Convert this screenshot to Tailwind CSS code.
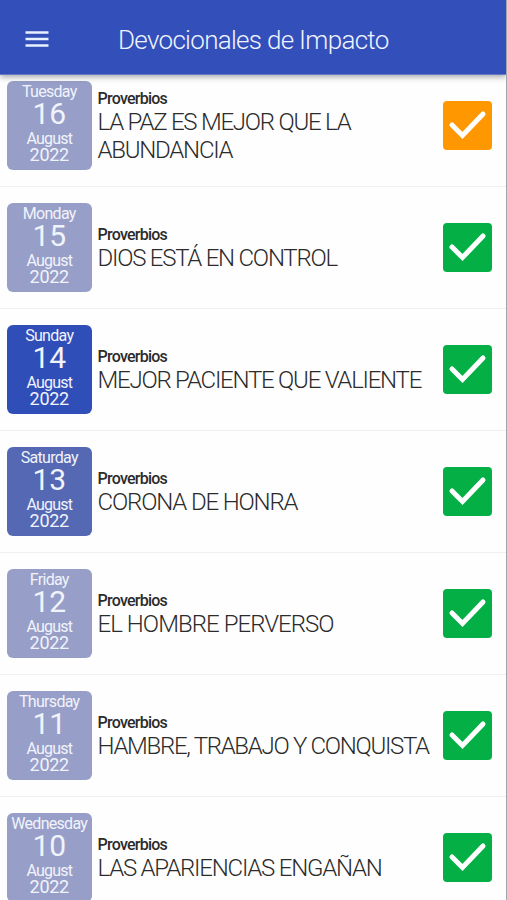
<!DOCTYPE html>
<html lang="es">

<head>
    <meta charset="UTF-8">
    <meta name="viewport" content="width=device-width, initial-scale=1.0">
    <script src="https://cdn.jsdelivr.net/npm/@tailwindcss/browser@4"></script>
    <title>Devocionales de Impacto</title>
</head>

<body class="bg-[#fefefe] font-['Roboto','Noto_Sans',sans-serif]">

    <div class="h-[900px] w-[507px] overflow-hidden border-r border-[#a3a6ad]">
        <!-- header -->
        <header class="relative z-10 flex h-[75px] items-center bg-[#324fba] pt-1 pl-[25px] border-b border-[#6378c6] shadow-[0_2px_6px_rgba(0,0,0,0.35)]">
            <button aria-label="Menu">
                <svg width="24" height="18" viewBox="0 0 24 18" fill="none" stroke="#e9f0ff" stroke-width="2.6">
                    <path d="M0.5 2.5h23M0.5 9h23M0.5 15.5h23" />
                </svg>
            </button>
            <h1 class="ml-[69px] pt-0.5 text-[26px] tracking-[-0.7px] font-light text-[#f0f4ff] whitespace-nowrap">Devocionales de Impacto</h1>
        </header>

        <!-- list -->
        <main id="list" class="-mt-[10px]"></main>
    </div>

</body>

<script>

    const devotionals = [
        { day: 'Tuesday', num: 16, tile: 'bg-[#979fc8]', check: 'bg-[#ff9800]', title: 'LA PAZ ES MEJOR QUE LA<br>ABUNDANCIA', track: 'tracking-[-1.24px]' },
        { day: 'Monday', num: 15, tile: 'bg-[#979fc8]', check: 'bg-[#04b046]', title: 'DIOS ESTÁ EN CONTROL', track: 'tracking-[-1.24px]' },
        { day: 'Sunday', num: 14, tile: 'bg-[#304eb8]', check: 'bg-[#04b046]', title: 'MEJOR PACIENTE QUE VALIENTE', track: 'tracking-[-1.24px]' },
        { day: 'Saturday', num: 13, tile: 'bg-[#5468b3]', check: 'bg-[#04b046]', title: 'CORONA DE HONRA', track: 'tracking-[-1.15px]' },
        { day: 'Friday', num: 12, tile: 'bg-[#979fc8]', check: 'bg-[#04b046]', title: 'EL HOMBRE PERVERSO', track: 'tracking-[-0.95px]' },
        { day: 'Thursday', num: 11, tile: 'bg-[#979fc8]', check: 'bg-[#04b046]', title: 'HAMBRE, TRABAJO Y CONQUISTA', track: 'tracking-[-1.3px]' },
        { day: 'Wednesday', num: 10, tile: 'bg-[#979fc8]', check: 'bg-[#04b046]', title: 'LAS APARIENCIAS ENGAÑAN', track: 'tracking-[-1.22px]' },
    ];

    document.getElementById('list').innerHTML = devotionals.map(d => `
        <article class="flex h-[122px] items-center border-b border-[#efefef] pl-[7px] pr-[14px]">
            <div class="${d.tile} flex h-[89px] w-[84.5px] shrink-0 flex-col items-center rounded-md pt-px text-[#f1f3fb]">
                <span class="text-base leading-5 tracking-[-0.7px]">${d.day}</span>
                <span class="-mt-px text-[30px] leading-[26px]">${d.num}</span>
                <span class="mt-1 text-base leading-4 tracking-[-0.8px]">August</span>
                <span class="text-lg leading-4 tracking-[-0.3px]">2022</span>
            </div>
            <div class="ml-1.5 min-w-0 flex-1 whitespace-nowrap pt-0.5 text-[#2b2b2b]">
                <p class="text-base leading-[18px] font-medium tracking-[-0.75px]">Proverbios</p>
                <h2 class="${d.track} text-2xl leading-7 font-light">${d.title}</h2>
            </div>
            <div class="${d.check} h-[49px] w-[49px] shrink-0 rounded">
                <svg viewBox="0 0 49 49" fill="none" stroke="#fff" stroke-width="5" stroke-linecap="round">
                    <path d="M9 24l10.5 10.5L40 13" />
                </svg>
            </div>
        </article>
    `).join('');

</script>

</html>
